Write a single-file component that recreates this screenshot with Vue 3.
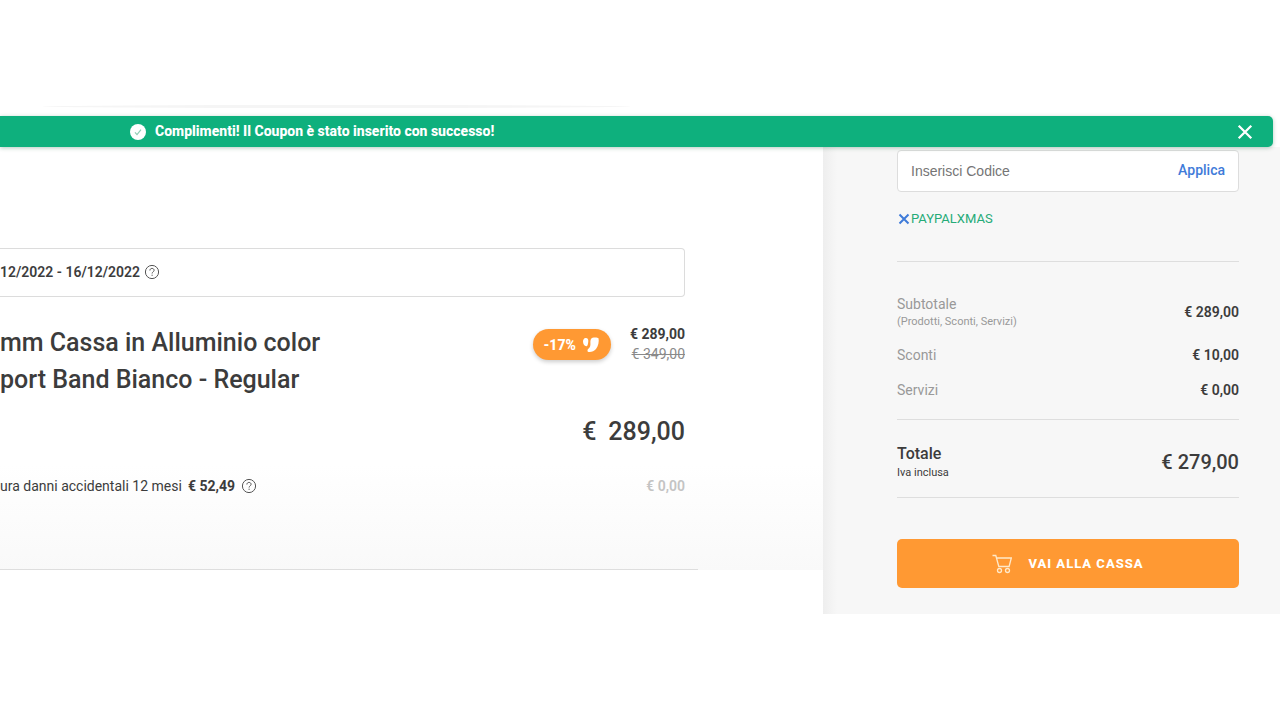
<template>
  <div class="cart-page">
    <div class="previous-card"></div>

    <div class="toast" role="status">
      <svg class="toast-check" viewBox="0 0 16 16">
        <circle cx="8" cy="8" r="8" fill="#fff" />
        <path d="M5 8.4l2 2.2 4-5" fill="none" stroke="#8fcdb5" stroke-width="1.2" />
      </svg>
      <strong>Complimenti! Il Coupon è stato inserito con successo!</strong>
      <button class="toast-close" type="button" aria-label="Chiudi" @click="closeToast">
        <svg viewBox="0 0 14 14"><path d="M1.5 1.5l11 11M12.5 1.5l-11 11" /></svg>
      </button>
    </div>

    <div class="columns">
      <main class="cart">
        <div class="cart-body">
          <div class="delivery">
            <span>12/2022 - 16/12/2022</span>
            <button class="help" type="button" aria-label="Info consegna">
              <svg viewBox="0 0 16 16">
                <circle cx="8" cy="8" r="6.6" />
                <path d="M5.9 6.5c0-1.3.9-2.1 2.1-2.1s2.1.8 2.1 1.9c0 1.5-2 1.6-2 3.2M8.1 10.7v1.2" />
              </svg>
            </button>
          </div>

          <div class="product">
            <h1>mm Cassa in Alluminio color<br>port Band Bianco - Regular</h1>
            <div class="offer">
              <span class="badge">
                -17%
                <svg viewBox="0 0 18 16">
                  <path d="M3.6.9C5.6.7 6.5 2.1 6.3 4.2 6.1 6.6 5.8 9 4.5 9.2 2.5 9.4 1 7.2 1 4.6 1 2.5 2 1.1 3.6.9z" />
                  <path d="M10.5.8C12.7.2 15.6.3 16.5 1.3 17.2 4.5 16.4 9 14 12 12 14.5 8.4 15.4 5.8 14.7 5.2 13.6 5.5 12.5 6.4 11.8 8.4 10.3 8.5 8.5 8.4 6 8.3 3.5 8.5 1.5 10.5.8z" />
                </svg>
              </span>
              <div class="prices">
                <strong>€ 289,00</strong>
                <del>€ 349,00</del>
              </div>
            </div>
          </div>

          <p class="line-total"><span>€</span><span>289,00</span></p>

          <div class="service">
            <span>ura danni accidentali 12 mesi</span>
            <b>€ 52,49</b>
            <button class="help" type="button" aria-label="Info copertura">
              <svg viewBox="0 0 16 16">
                <circle cx="8" cy="8" r="6.6" />
                <path d="M5.9 6.5c0-1.3.9-2.1 2.1-2.1s2.1.8 2.1 1.9c0 1.5-2 1.6-2 3.2M8.1 10.7v1.2" />
              </svg>
            </button>
            <span class="service-price">€ 0,00</span>
          </div>
        </div>
      </main>

      <aside class="summary">
        <form class="coupon" @submit.prevent="applyCoupon">
          <input v-model="code" type="text" placeholder="Inserisci Codice" aria-label="Inserisci Codice">
          <button type="submit">Applica</button>
        </form>

        <div v-if="coupon" class="applied">
          <button type="button" aria-label="Rimuovi coupon" @click="coupon = ''">
            <svg viewBox="0 0 12 12"><path d="M1.5 1.5l9 9M10.5 1.5l-9 9" /></svg>
          </button>
          <span>{{ coupon }}</span>
        </div>

        <dl class="rows">
          <div v-for="row in rows" :key="row.label" class="row">
            <dt>{{ row.label }}<small v-if="row.note">{{ row.note }}</small></dt>
            <dd>{{ row.value }}</dd>
          </div>
        </dl>

        <div class="total">
          <div class="total-label">Totale<small>Iva inclusa</small></div>
          <strong>€ 279,00</strong>
        </div>

        <button class="checkout" type="button">
          <svg viewBox="0 0 20 20">
            <path d="M.5 1.5h3.3l3 11h10.3l2.2-8.5H4.5" />
            <circle cx="7.5" cy="16.5" r="2" />
            <circle cx="15.5" cy="16.5" r="2" />
          </svg>
          <span>VAI ALLA CASSA</span>
        </button>
      </aside>
    </div>
  </div>
</template>

<script setup>
import { ref } from 'vue'

const code = ref('')
const coupon = ref('PAYPALXMAS')

const rows = [
  { label: 'Subtotale', note: '(Prodotti, Sconti, Servizi)', value: '€ 289,00' },
  { label: 'Sconti', value: '€ 10,00' },
  { label: 'Servizi', value: '€ 0,00' }
]

const applyCoupon = () => {
  if (!code.value) return
  coupon.value = code.value.toUpperCase()
  code.value = ''
}

const closeToast = (e) => {
  e.currentTarget.parentElement.style.visibility = 'hidden'
}
</script>

<style>
body {
  background: #fff;
}
</style>

<style scoped>
.cart-page {
  padding-top: 105px;
  font-family: Roboto, sans-serif;
  font-size: 14px;
  line-height: 20px;
  color: #3c3c3c;
}

button {
  padding: 0;
  border: none;
  background: none;
  font-family: inherit;
  cursor: pointer;
}

svg {
  display: block;
}

.previous-card {
  width: 46%;
  height: 3px;
  margin-left: 42px;
  border-radius: 50%;
  background: #f5f5f5;
}

/* notifica */
.toast {
  position: relative;
  z-index: 2;
  display: flex;
  align-items: center;
  height: 31px;
  margin: 8px 7px 0 0;
  padding: 0 20px 0 130px;
  box-sizing: border-box;
  border-radius: 0 5px 5px 0;
  background: #0eb07d;
  box-shadow: 0 1px 4px rgba(0, 80, 50, 0.3);
  color: #fff;
}

.toast-check {
  width: 16px;
  height: 16px;
  margin-right: 9px;
}

.toast strong {
  padding-bottom: 2px;
  font-weight: 800;
}

.toast-close {
  margin-left: auto;
}

.toast-close svg {
  width: 16px;
  height: 16px;
  fill: none;
  stroke: #fff;
  stroke-width: 2;
}

.columns {
  display: grid;
  grid-template-columns: 1fr 457px;
  align-items: start;
}

/* carrello */
.cart {
  background: linear-gradient(#fff 75%, #f9f9f9);
}

.cart-body {
  margin-right: 125px;
  padding: 101px 13px 73px 0;
  border-bottom: 1px solid #dedede;
}

.delivery {
  display: flex;
  align-items: center;
  gap: 4px;
  height: 49px;
  padding-bottom: 2px;
  box-sizing: border-box;
  border: 1px solid #dcdcdc;
  border-left: none;
  border-radius: 0 4px 4px 0;
  font-weight: 600;
}

.help svg {
  width: 16px;
  height: 16px;
  fill: none;
  stroke: #555;
}

.product {
  display: flex;
  justify-content: space-between;
  margin-top: 27px;
}

h1 {
  margin: 0;
  font-size: 25px;
  font-weight: 500;
  line-height: 37px;
}

.offer {
  display: flex;
  align-items: flex-start;
  gap: 19px;
}

.badge {
  display: flex;
  align-items: center;
  gap: 6px;
  height: 31px;
  margin-top: 5px;
  padding: 0 11px 0 10px;
  border-radius: 16px;
  background: #ff9933;
  box-shadow: 0 2px 4px rgba(0, 0, 0, 0.2);
  color: #fff;
  font-weight: 800;
}

.badge svg {
  width: 18px;
  height: 16px;
  fill: #fff;
}

.prices {
  display: flex;
  flex-direction: column;
  text-align: right;
}

.prices strong {
  font-weight: 700;
}

.prices del {
  color: #8a8a8a;
}

.line-total {
  display: flex;
  justify-content: flex-end;
  gap: 12px;
  margin: 16px 0 0;
  font-size: 25px;
  font-weight: 500;
  line-height: 36px;
}

.service {
  display: flex;
  align-items: center;
  gap: 6px;
  margin-top: 26px;
}

.service-price {
  margin-left: auto;
  color: #c4c4c4;
  font-weight: 600;
}

/* riepilogo */
.summary {
  padding: 3px 41px 26px 74px;
  background: linear-gradient(90deg, #eeeeee, #f7f7f7 14px);
}

.coupon {
  display: flex;
  align-items: center;
  height: 42px;
  padding: 0 13px;
  box-sizing: border-box;
  border: 1px solid #dddddd;
  border-radius: 4px;
  background: #fff;
}

.coupon input {
  flex: 1;
  min-width: 0;
  padding: 0;
  border: none;
  outline: none;
  background: none;
  font-family: "Liberation Sans", Arial, sans-serif;
  font-size: 14px;
}

.coupon input::placeholder {
  color: #757575;
}

.coupon button {
  padding-bottom: 2px;
  color: #3f7bd9;
  font-size: 14px;
  font-weight: 500;
}

.applied {
  display: flex;
  align-items: center;
  gap: 1px;
  margin-top: 17px;
  padding-left: 1px;
  color: #25ab77;
  font-size: 13px;
}

.applied svg {
  width: 12px;
  height: 12px;
  fill: none;
  stroke: #3f7bd9;
  stroke-width: 2;
}

.rows {
  display: flex;
  flex-direction: column;
  gap: 15px;
  margin: 32px 0 0;
  padding: 32px 0 19px;
  border-top: 1px solid #dedede;
  border-bottom: 1px solid #dedede;
}

.row {
  display: flex;
  justify-content: space-between;
  align-items: center;
}

dt {
  color: #999;
}

dd {
  margin: 0;
  font-weight: 600;
}

small {
  display: block;
  font-size: 11px;
  line-height: 16px;
}

.total {
  display: flex;
  justify-content: space-between;
  align-items: center;
  padding: 23px 0 16px;
  border-bottom: 1px solid #dedede;
}

.total-label {
  font-size: 16px;
  font-weight: 500;
  line-height: 22px;
}

.total-label small {
  font-weight: 400;
}

.total strong {
  font-size: 20px;
  font-weight: 500;
}

.checkout {
  display: flex;
  justify-content: center;
  align-items: center;
  gap: 16px;
  width: 100%;
  height: 49px;
  margin-top: 41px;
  border-radius: 5px;
  background: #ff9933;
  color: #fff;
  font-size: 13px;
  font-weight: 800;
  letter-spacing: 1px;
}

.checkout svg {
  width: 20px;
  height: 20px;
  fill: none;
  stroke: #ffe9c9;
  stroke-width: 1.3;
}
</style>
